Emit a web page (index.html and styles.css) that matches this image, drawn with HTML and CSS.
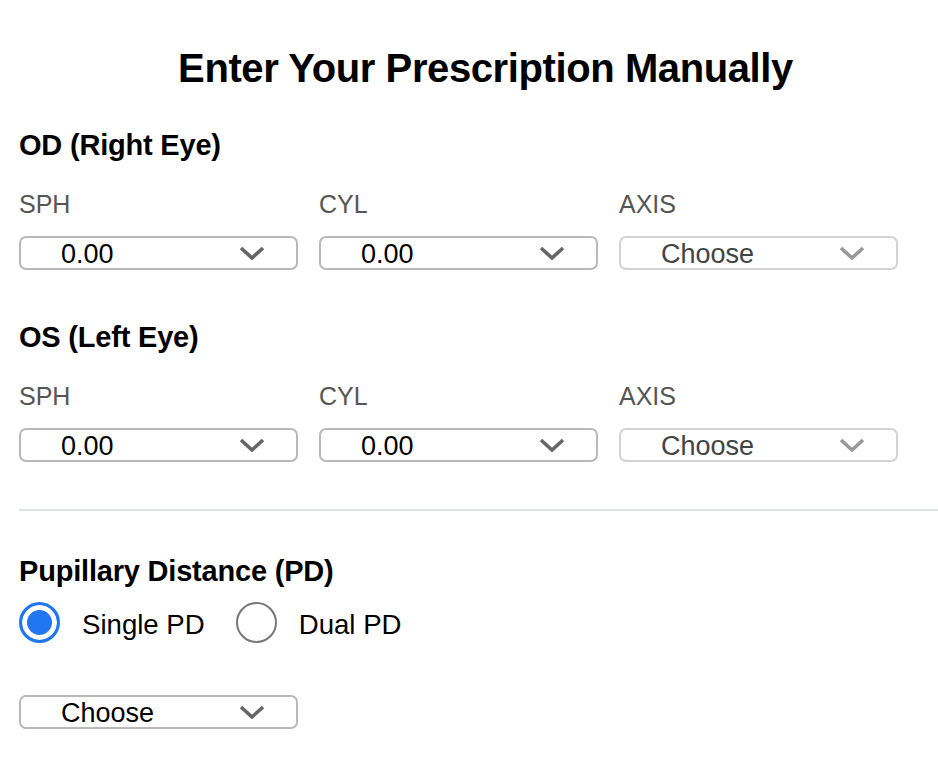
FILE: index.html
```html
<!DOCTYPE html>
<html lang="en">
<head>
    <meta charset="UTF-8">
    <title>Enter Your Prescription Manually</title>
    <link rel="stylesheet" href="styles.css">
</head>
<body>
<div class="rx">
    <h1 class="rx-title">Enter Your Prescription Manually</h1>

    <!-- right eye -->
    <h2 class="eye-title">OD (Right Eye)</h2>
    <div class="fields">
        <div class="field">
            <div class="field-label">SPH</div>
            <div class="pick"><span>0.00</span><svg class="caret" viewBox="0 0 26 14"><path d="M2 2 L13 12 L24 2"/></svg></div>
        </div>
        <div class="field">
            <div class="field-label">CYL</div>
            <div class="pick"><span>0.00</span><svg class="caret" viewBox="0 0 26 14"><path d="M2 2 L13 12 L24 2"/></svg></div>
        </div>
        <div class="field">
            <div class="field-label">AXIS</div>
            <div class="pick off"><span>Choose</span><svg class="caret" viewBox="0 0 26 14"><path d="M2 2 L13 12 L24 2"/></svg></div>
        </div>
    </div>

    <!-- left eye -->
    <h2 class="eye-title second">OS (Left Eye)</h2>
    <div class="fields">
        <div class="field">
            <div class="field-label">SPH</div>
            <div class="pick"><span>0.00</span><svg class="caret" viewBox="0 0 26 14"><path d="M2 2 L13 12 L24 2"/></svg></div>
        </div>
        <div class="field">
            <div class="field-label">CYL</div>
            <div class="pick"><span>0.00</span><svg class="caret" viewBox="0 0 26 14"><path d="M2 2 L13 12 L24 2"/></svg></div>
        </div>
        <div class="field">
            <div class="field-label">AXIS</div>
            <div class="pick off"><span>Choose</span><svg class="caret" viewBox="0 0 26 14"><path d="M2 2 L13 12 L24 2"/></svg></div>
        </div>
    </div>

    <hr class="split">

    <h2 class="eye-title pd">Pupillary Distance (PD)</h2>
    <div class="pd-type">
        <label class="opt"><input type="radio" name="pd" checked><span>Single PD</span></label>
        <label class="opt"><input type="radio" name="pd"><span>Dual PD</span></label>
    </div>
    <div class="pick pd-pick"><span>Choose</span><svg class="caret" viewBox="0 0 26 14"><path d="M2 2 L13 12 L24 2"/></svg></div>
</div>
</body>
</html>
```

FILE: styles.css
```css
* {
    margin: 0;
    padding: 0;
    box-sizing: border-box;
}

body {
    background: #fff;
    font-family: "Liberation Sans", Arial, sans-serif;
    color: #000;
}

.rx {
    width: 938px;
    padding-left: 19px;
}

.rx-title {
    padding-top: 45px;
    padding-left: 14px;
    font-size: 40px;
    line-height: 46px;
    font-weight: bold;
    letter-spacing: -0.4px;
    text-align: center;
}

.eye-title {
    margin-top: 37px;
    font-size: 29px;
    line-height: 34px;
    font-weight: bold;
    letter-spacing: -0.2px;
}

.eye-title.second {
    margin-top: 50px;
}

.eye-title.pd {
    margin-top: 43px;
}

.fields {
    display: grid;
    grid-template-columns: repeat(3, 279px);
    column-gap: 21px;
    margin-top: 28px;
}

.field-label {
    font-size: 25px;
    line-height: 28px;
    color: #555;
}

.pick {
    display: flex;
    align-items: center;
    justify-content: space-between;
    width: 279px;
    height: 34px;
    margin-top: 18px;
    padding: 0 31px 0 40px;
    border: 2px solid #b9b9b9;
    border-radius: 7px;
    font-size: 27px;
    color: #000;
}

.pick span {
    line-height: 30px;
    padding-top: 1px;
}

.caret {
    width: 26px;
    height: 14px;
    fill: none;
    stroke: #666;
    stroke-width: 3.6;
}

.pick.off {
    border-color: #d3d3d3;
    color: #444;
}

.pick.off .caret {
    stroke: #999;
}

.split {
    margin-top: 47px;
    height: 2px;
    border: 0;
    background: #dfe2e5;
}

.pd-type {
    display: flex;
    gap: 31px;
    margin-top: 14px;
}

.opt {
    display: flex;
    align-items: center;
    gap: 22px;
    font-size: 27.6px;
}

.opt span {
    padding-top: 4px;
}

.opt input {
    appearance: none;
    -webkit-appearance: none;
    width: 41px;
    height: 41px;
    margin: 0;
    border: 2px solid #777;
    border-radius: 50%;
    background: #fff;
}

.opt input:checked {
    border: 3px solid #2176f3;
    background: #2176f3;
    box-shadow: inset 0 0 0 5px #fff;
}

.pd-pick {
    margin-top: 52px;
}
```
